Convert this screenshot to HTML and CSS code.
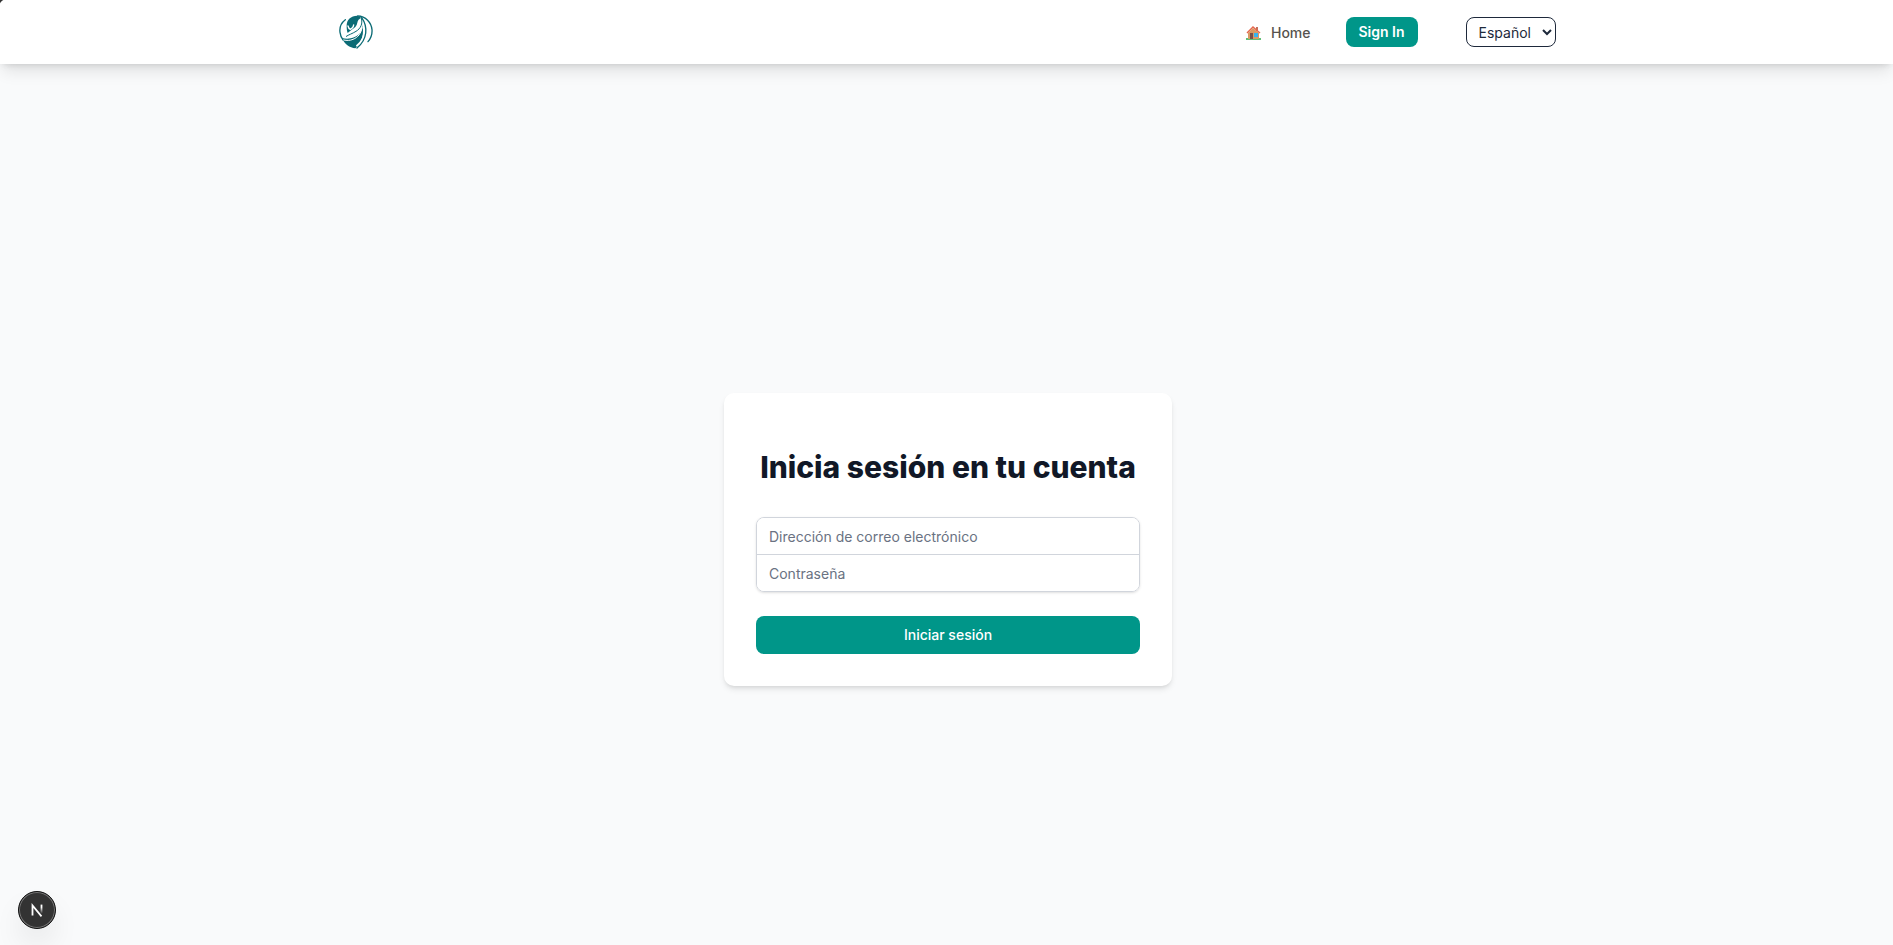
FILE: index.html
```html
<!DOCTYPE html>
<html lang="es">
<head>
    <meta charset="UTF-8">
    <meta name="viewport" content="width=device-width, initial-scale=1.0">
    <title>Iniciar sesión</title>
    <link rel="stylesheet" href="styles.css">
</head>
<body>
<header class="header">
    <nav class="navbar">
        <a class="logo" href="#" aria-label="Inicio">
            <svg viewBox="8 8 102 102" width="34" height="34" fill="none" stroke="#0b6b75" stroke-width="4" stroke-linecap="round">
                <path d="M27 22C15 31 9 45 11 60c1 9 4 17 10 24"/>
                <path d="M64 11c24 1 41 19 43 41 1 14-4 27-12 36"/>
                <path d="M31 39C31 22 43 11 63 10l12 6c-7 3-11 8-12 15-1 10-9 16-18 22l-11 9c-3-7-3-14-3-23z" fill="#0b6b75" stroke="none"/>
                <path d="M35 41c1 5 3 8 7 10 5-2 9-6 10-13" stroke="#fff"/>
                <path d="M75 18c5 16-2 31-16 39-11 7-22 10-29 15" stroke-width="3"/>
                <path d="M77 31c5 20-5 36-22 43-13 6-26 6-38 3 6 17 24 30 40 31 20-17 28-45 20-77z" fill="#0b6b75" stroke="none"/>
                <path d="M77 46c-3 18-12 29-27 35-9 4-18 4-28 2" stroke="#fff" stroke-width="3"/>
                <path d="M86 46c0 25-9 42-24 54" stroke="#fff" stroke-width="6"/>
                <path d="M76 16c19 27 18 65-14 91"/>
            </svg>
        </a>
        <div class="nav-items">
            <a class="nav-link" href="#">
                <svg viewBox="0 0 15 15" width="15" height="15">
                    <path d="M0 12h15v2H0z" fill="#62bf78"/>
                    <path d="M10 1h2v4h-2z" fill="#c4705c"/>
                    <path d="M2 7l5-5 6 5v6H2z" fill="#d99a63"/>
                    <path d="M4 7h3v6H4z" fill="#7b5148"/>
                    <path d="M8 7h4v4H8z" fill="#36b4ef"/>
                    <path d="M1 7l6-6 7 6" fill="none" stroke="#e4674d" stroke-width="1.4"/>
                </svg>
                Home
            </a>
            <button class="btn btn-small" type="button">Sign In</button>
            <select class="language" aria-label="Idioma">
                <option>Español</option>
                <option>English</option>
            </select>
        </div>
    </nav>
</header>
<main class="content">
    <div class="card">
        <h1>Inicia sesión en tu cuenta</h1>
        <form>
            <div class="fields">
                <input type="email" name="email" placeholder="Dirección de correo electrónico" aria-label="Dirección de correo electrónico">
                <input type="password" name="password" placeholder="Contraseña" aria-label="Contraseña">
            </div>
            <button class="btn btn-block" type="submit">Iniciar sesión</button>
        </form>
    </div>
</main>
<button class="dev-badge" type="button" aria-label="Next.js">
    <svg viewBox="0 0 40 40" width="40" height="40" fill="none" stroke-width="2">
        <defs>
            <linearGradient id="fade" x1="0" y1="0" x2="0" y2="1">
                <stop offset="0.3" stop-color="#fff"/>
                <stop offset="1" stop-color="#fff" stop-opacity="0"/>
            </linearGradient>
        </defs>
        <path d="M15 26V15l10 12" stroke="#fff"/>
        <path d="M24 14h2v10h-2z" fill="url(#fade)"/>
    </svg>
</button>
</body>
</html>
```

FILE: styles.css
```css
* {
    box-sizing: border-box;
}
body {
    font-family: Inter, sans-serif;
    font-size: 14px;
    line-height: 20px;
    margin: 0;
    min-height: 100vh;
    display: flex;
    flex-direction: column;
    background-color: #f9fafb;
    color: #111827;
}
/* dark window corner */
body::before {
    content: "";
    position: fixed;
    top: 0;
    left: 0;
    width: 6px;
    height: 6px;
    z-index: 2;
    background: radial-gradient(circle at 6px 6px, transparent 6px, #333 7px);
}
button,
input,
select {
    font: inherit;
}
.header {
    position: relative;
    background-color: white;
    box-shadow: 0 10px 15px -3px rgba(0, 0, 0, 0.1), 0 4px 6px -4px rgba(0, 0, 0, 0.1), 0 0 10px rgba(0, 0, 0, 0.05);
}
.navbar {
    display: flex;
    justify-content: space-between;
    align-items: center;
    max-width: 1280px;
    height: 64px;
    margin: 0 auto;
    padding: 0 31px 0 32px;
}
.logo {
    display: flex;
}
.nav-items {
    display: flex;
    align-items: center;
}
.nav-link {
    display: flex;
    align-items: center;
    gap: 10px;
    margin-right: 35px;
    padding-top: 2px;
    color: #57534e;
    font-weight: 500;
    text-decoration: none;
}
.btn {
    background-color: #009689;
    color: white;
    border: none;
    border-radius: 8px;
    font-weight: 500;
    cursor: pointer;
}
.btn-small {
    width: 72px;
    height: 30px;
    padding: 0;
    font-weight: 600;
}
.language {
    width: 90px;
    height: 30px;
    margin-left: 48px;
    padding: 0 0 0 8px;
    background-color: white;
    color: #1e293b;
    border: 1px solid #1e293b;
    border-radius: 8px;
}
.content {
    flex: 1;
    display: flex;
    justify-content: center;
    align-items: center;
    padding: 70px 16px 0 19px;
}
.card {
    width: 100%;
    max-width: 448px;
    padding: 32px;
    background-color: white;
    border-radius: 10px;
    box-shadow: 0 4px 6px -1px rgba(0, 0, 0, 0.1), 0 2px 4px -2px rgba(0, 0, 0, 0.1);
}
h1 {
    margin: 24px -16px 32px;
    font-size: 30px;
    line-height: 36px;
    font-weight: 800;
    text-align: center;
}
.fields {
    margin-bottom: 24px;
    border: 1px solid #d1d5dc;
    border-radius: 8px;
    box-shadow: 0 1px 3px rgba(0, 0, 0, 0.1), 0 1px 2px -1px rgba(0, 0, 0, 0.1);
    overflow: hidden;
}
.fields input {
    display: block;
    width: 100%;
    height: 36px;
    padding: 0 12px;
    border: none;
    background-color: white;
}
.fields input + input {
    height: 37px;
    border-top: 1px solid #d1d5dc;
}
.fields input::placeholder {
    color: #6a7282;
}
.btn-block {
    display: block;
    width: 100%;
    height: 38px;
}
.dev-badge {
    position: fixed;
    left: 18px;
    bottom: 16px;
    width: 38px;
    height: 38px;
    padding: 0;
    border: 1px solid #111;
    border-radius: 50%;
    background-color: #333;
    box-shadow: inset 0 0 0 1px #777, 0 16px 32px -8px rgba(0, 0, 0, 0.2);
    display: flex;
    justify-content: center;
    align-items: center;
}
```
